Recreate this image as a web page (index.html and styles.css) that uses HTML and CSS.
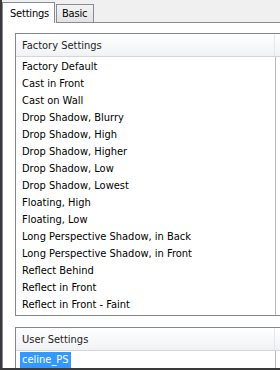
FILE: index.html
```html
<!DOCTYPE html>
<html lang="en">
<head>
    <meta charset="UTF-8">
    <title>Settings</title>
    <link rel="stylesheet" href="styles.css">
</head>
<body>
    <div class="frame">
        <div class="tabs">
            <div class="tab tab-active">Settings</div>
            <div class="tab">Basic</div>
            <div class="tab-fill"></div>
        </div>
        <div class="panel">
            <div class="listbox factory">
                <div class="list-header"><div class="header-cell">Factory Settings</div></div>
                <div class="rows">
                    <div class="row">Factory Default</div>
                    <div class="row">Cast in Front</div>
                    <div class="row">Cast on Wall</div>
                    <div class="row">Drop Shadow, Blurry</div>
                    <div class="row">Drop Shadow, High</div>
                    <div class="row">Drop Shadow, Higher</div>
                    <div class="row">Drop Shadow, Low</div>
                    <div class="row">Drop Shadow, Lowest</div>
                    <div class="row">Floating, High</div>
                    <div class="row">Floating, Low</div>
                    <div class="row">Long Perspective Shadow, in Back</div>
                    <div class="row">Long Perspective Shadow, in Front</div>
                    <div class="row">Reflect Behind</div>
                    <div class="row">Reflect in Front</div>
                    <div class="row">Reflect in Front - Faint</div>
                </div>
            </div>
            <div class="listbox">
                <div class="list-header"><div class="header-cell">User Settings</div></div>
                <div class="rows user">
                    <div class="row row-user"><span class="selected">celine_PS</span></div>
                </div>
            </div>
        </div>
    </div>
</body>
</html>
```
FILE: styles.css
```css
body {
    margin: 0;
    font-family: "DejaVu Sans Condensed", "Liberation Sans", sans-serif;
    font-size: 11px;
    color: #000;
    background: #fff;
    overflow: hidden;
}
.frame {
    width: 280px;
    height: 370px;
    box-sizing: border-box;
    border-left: 2px solid #3a3a3a;
    border-bottom: 2px solid #3a3a3a;
    overflow: hidden;
}

/* tab strip */
.tabs {
    display: flex;
    align-items: flex-end;
    height: 23px;
    background: #f0f0f0;
}
.tab {
    box-sizing: border-box;
    width: 38px;
    height: 19px;
    margin-left: 1px;
    padding-left: 5px;
    line-height: 18px;
    letter-spacing: -0.2px;
    border: 1px solid #898c95;
    background: linear-gradient(#f3f3f3, #e2e2e2);
}
.tab-active {
    width: 53px;
    height: 21px;
    margin-left: 0;
    padding-left: 7px;
    line-height: 21px;
    border-bottom: none;
    background: #fff;
}
.tab-fill {
    flex: 1;
    border-bottom: 1px solid #898c95;
}

/* content */
.panel {
    height: 345px;
    border-left: 1px solid #898c95;
    padding: 10px 0 0 12px;
    overflow: hidden;
}
.listbox {
    border: 1px solid #828790;
    margin-right: -10px;
}
.factory {
    margin-bottom: 11px;
}
.list-header {
    height: 22px;
    background: linear-gradient(#ffffff, #f0f2f5);
    border-bottom: 1px solid #d5d5d5;
}
.header-cell {
    box-sizing: border-box;
    width: 259px;
    height: 22px;
    padding-left: 6px;
    line-height: 23px;
    color: #1e1e1e;
    border-right: 1px solid #e3e6ea;
}
.rows {
    width: 259px;
    padding: 1px 0 2px;
    border-right: 1px solid #b9b9b9;
}
.rows.user {
    padding-top: 0;
}
.row {
    height: 17px;
    line-height: 17px;
    padding-left: 6px;
    white-space: nowrap;
}
.row-user {
    padding-left: 4px;
}
.selected {
    display: inline-block;
    height: 16px;
    line-height: 16px;
    padding: 0 2px;
    background: #3399ff;
    color: #fff;
}
```
